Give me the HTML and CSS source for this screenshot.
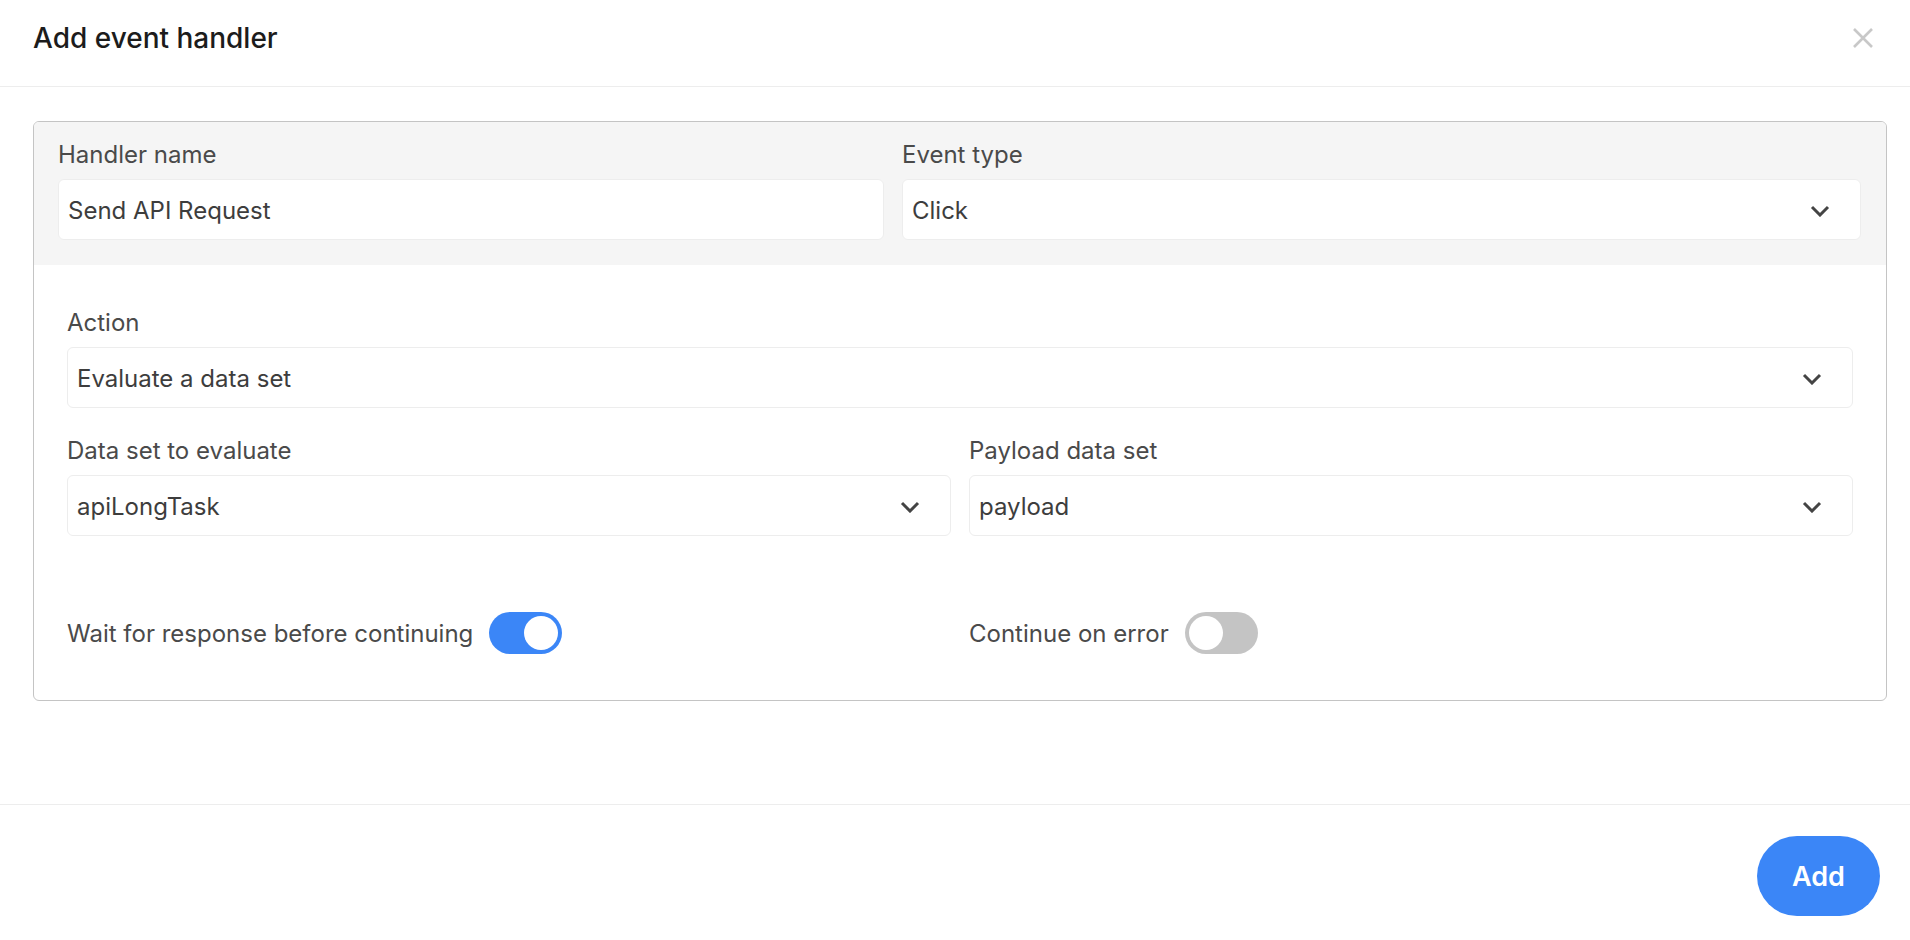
FILE: index.html
```html
<!DOCTYPE html>
<html lang="en">
<head>
    <meta charset="utf-8">
    <meta name="viewport" content="width=device-width, initial-scale=1">
    <title>Add event handler</title>
    <link rel="stylesheet" href="styles.css">
</head>
<body>
    <div class="modal">
        <div class="modal-header">
            <h1>Add event handler</h1>
            <button class="close-btn" aria-label="Close">
                <svg width="20" height="20" viewBox="0 0 20 20"><path d="M1 1 L19 19 M19 1 L1 19" stroke="#c8c8c8" stroke-width="2.6" fill="none"/></svg>
            </button>
        </div>

        <div class="modal-body">
            <div class="handler-card">
                <div class="card-top">
                    <div class="field field-name">
                        <label>Handler name</label>
                        <div class="input">Send API Request</div>
                    </div>
                    <div class="field field-type">
                        <label>Event type</label>
                        <div class="input select">
                            <span>Click</span>
                            <svg class="chevron" width="20" height="12" viewBox="0 0 20 12"><path d="M2 2 L10 10 L18 2" stroke="#444444" stroke-width="3" fill="none"/></svg>
                        </div>
                    </div>
                </div>

                <div class="card-main">
                    <div class="field">
                        <label>Action</label>
                        <div class="input select">
                            <span>Evaluate a data set</span>
                            <svg class="chevron" width="20" height="12" viewBox="0 0 20 12"><path d="M2 2 L10 10 L18 2" stroke="#444444" stroke-width="3" fill="none"/></svg>
                        </div>
                    </div>

                    <div class="field-grid">
                        <div class="field">
                            <label>Data set to evaluate</label>
                            <div class="input select">
                                <span>apiLongTask</span>
                                <svg class="chevron" width="20" height="12" viewBox="0 0 20 12"><path d="M2 2 L10 10 L18 2" stroke="#444444" stroke-width="3" fill="none"/></svg>
                            </div>
                        </div>
                        <div class="field">
                            <label>Payload data set</label>
                            <div class="input select">
                                <span>payload</span>
                                <svg class="chevron" width="20" height="12" viewBox="0 0 20 12"><path d="M2 2 L10 10 L18 2" stroke="#444444" stroke-width="3" fill="none"/></svg>
                            </div>
                        </div>
                    </div>

                    <div class="field-grid toggle-row">
                        <div class="toggle-item">
                            <span>Wait for response before continuing</span>
                            <span class="toggle on"><span class="knob"></span></span>
                        </div>
                        <div class="toggle-item">
                            <span>Continue on error</span>
                            <span class="toggle"><span class="knob"></span></span>
                        </div>
                    </div>
                </div>
            </div>
        </div>

        <div class="modal-footer">
            <button class="btn-add">Add</button>
        </div>
    </div>
</body>
</html>
```

FILE: styles.css
```css
:root {
    --text-dark: #1c1c1c;
    --text-label: #4a4a4a;
    --text-value: #3d3d3d;
    --border-light: #ededed;
    --card-border: #c4c4c4;
    --bg-soft: #f5f5f5;
    --blue: #3b86f7;
}

* {
    box-sizing: border-box;
}

body {
    margin: 0;
    font-family: Inter, 'Noto Sans', sans-serif;
    background: #ffffff;
    color: var(--text-value);
}

.modal {
    width: 1910px;
    height: 940px;
}

.modal-header {
    display: flex;
    justify-content: space-between;
    align-items: flex-start;
    height: 87px;
    padding: 21px 37px 0 33px;
    border-bottom: 1px solid var(--border-light);
}

.modal-header h1 {
    margin: 0;
    font-size: 28px;
    line-height: 34px;
    font-weight: 500;
    color: var(--text-dark);
}

.close-btn {
    background: none;
    border: none;
    padding: 0;
    margin-top: 7px;
    width: 20px;
    height: 20px;
    cursor: pointer;
}

.close-btn svg {
    display: block;
}

.modal-body {
    padding: 34px 23px 103px 33px;
}

.handler-card {
    border: 1.5px solid var(--card-border);
    border-radius: 6px;
    overflow: hidden;
}

.card-top {
    display: flex;
    gap: 18px;
    background: var(--bg-soft);
    padding: 18px 25px 25px 24px;
}

.field-name {
    flex: 0 0 826px;
}

.field-type {
    flex: 1;
}

.field {
    display: flex;
    flex-direction: column;
    gap: 10px;
}

.field label {
    font-size: 24px;
    line-height: 29px;
    color: var(--text-label);
}

.input {
    display: flex;
    align-items: center;
    justify-content: space-between;
    height: 61px;
    padding: 2px 30px 0 9px;
    background: #ffffff;
    border: 1px solid var(--border-light);
    border-radius: 6px;
    font-size: 24px;
    color: var(--text-value);
}

.chevron {
    display: block;
}

.card-main {
    display: flex;
    flex-direction: column;
    gap: 28px;
    padding: 43px 33px 46px 33px;
}

.field-grid {
    display: grid;
    grid-template-columns: 1fr 1fr;
    gap: 18px;
}

.toggle-row {
    margin-top: 48px;
}

.toggle-item {
    display: flex;
    align-items: center;
    gap: 16px;
    font-size: 24px;
    color: var(--text-label);
}

.toggle {
    display: flex;
    align-items: center;
    width: 73px;
    height: 42px;
    padding: 0 4px;
    border-radius: 21px;
    background: #c4c4c4;
}

.toggle .knob {
    width: 34px;
    height: 34px;
    border-radius: 50%;
    background: #ffffff;
}

.toggle.on {
    background: var(--blue);
    justify-content: flex-end;
}

.modal-footer {
    display: flex;
    justify-content: flex-end;
    padding: 31px 30px 0 0;
    border-top: 1px solid var(--border-light);
}

.btn-add {
    width: 123px;
    height: 80px;
    border: none;
    border-radius: 40px;
    background: var(--blue);
    color: #ffffff;
    font-family: Inter, 'Noto Sans', sans-serif;
    font-size: 27px;
    font-weight: 600;
    cursor: pointer;
}
```
